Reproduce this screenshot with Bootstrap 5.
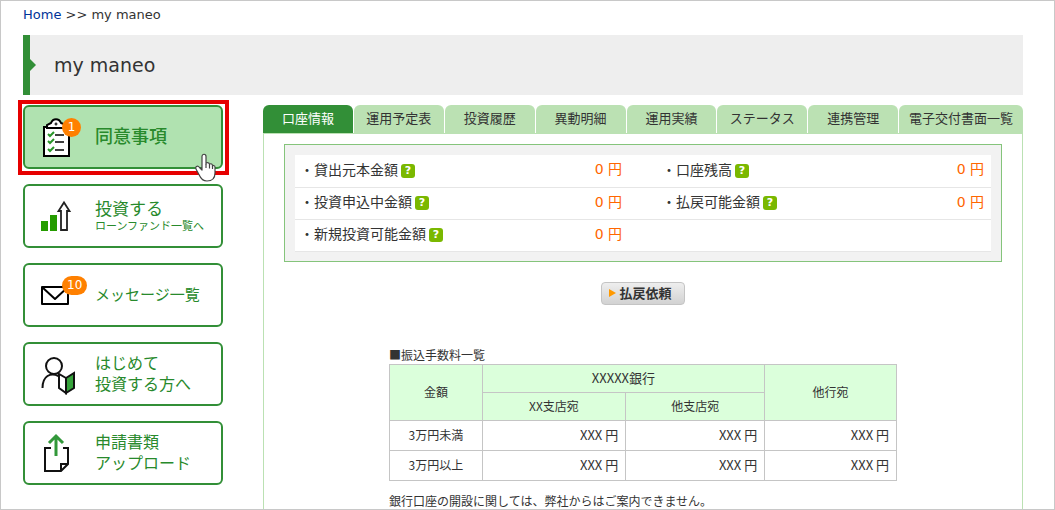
<!DOCTYPE html>
<html lang="ja">
<head>
<meta charset="utf-8">
<meta name="viewport" content="width=device-width, initial-scale=1">
<title>my maneo</title>
<link href="https://cdn.jsdelivr.net/npm/bootstrap@5.3.0/dist/css/bootstrap.min.css" rel="stylesheet">
<style>
:root{--green:#328f37;--pale:#bbe1b3}
body{font-family:"DejaVu Sans","Noto Sans CJK JP",sans-serif;font-size:14px;color:#333;background:#fff}
.shell{border:1px solid #c8c8c8;padding:0 31px 0 22px}
.crumbs{font-size:13px;line-height:18px;padding:5px 0 11px}
.crumbs a{color:#039;text-decoration:none}
.page-title{background:#eee;border-left:7px solid var(--green);font-size:19px;font-weight:400;line-height:60px;padding-left:24px;margin:0 0 10px}
.page-title::before{content:"";position:absolute;left:0;top:24px;border:6px solid transparent;border-left-color:var(--green);border-right:0}
.side{width:200px;gap:15px}
.side-btn{height:64px;border:2px solid var(--green);border-radius:6px;background:#fff;color:#288a2c;text-decoration:none;padding-left:10px;gap:10px;font-family:"Noto Sans CJK JP",sans-serif;font-size:16px;line-height:21px}
.side-btn.current{background:#b0e2b0}
.side-btn svg{width:50px;height:60px;display:block}
.side-text{padding-bottom:3px}
.side-btn .big{font-size:18px;font-weight:500}
.side-btn .mid{font-size:17px}
.side-btn .long{font-size:15px}
.side-btn .sub{font-size:11px;line-height:14px}
.count{left:27px;top:11px;min-width:19px;height:19px;border-radius:10px;background:#ff8000;color:#fff;font:12px/19px "DejaVu Sans",sans-serif;padding:0 5px;text-align:center}
.mark-frame{inset:-7px -8px -8px -7px;border:4px solid #e60000;pointer-events:none}
.hand{right:5px;bottom:-15px;pointer-events:none}
.side-btn svg.hand{width:21px;height:29px}
.content{margin-left:40px;min-width:0}
.tabs{border-bottom:1px solid var(--pale);gap:1px}
.tabs a{flex:1 1 90px;height:28px;line-height:25px;background:var(--pale);border-radius:6px 6px 0 0;color:#333;text-decoration:none;text-align:center;font-family:"Noto Sans CJK JP",sans-serif;font-size:13px;white-space:nowrap}
.tabs a.active{background:var(--green);color:#fff}
.tabs a:last-child{flex:1 1 124px}
.pane{border:1px solid var(--pale);border-top:0;padding:10px 20px 30px}
.summary{border:1px solid #85c47b;background:#f2f2f2;padding:10px 10px 9px}
.summary table{width:100%;background:#fff;table-layout:fixed;font-family:"Noto Sans CJK JP",sans-serif;font-size:14px;line-height:21px}
.summary tr{border-bottom:1px solid #e6e6e6;height:32px}
.summary th{font-weight:400;padding:0 0 3px 5px;white-space:nowrap}
.summary td{color:#f60;text-align:right;padding:0 21px 2px 0;font-family:"DejaVu Sans","Noto Sans CJK JP",sans-serif}
.summary td:last-child{padding-right:7px}
.summary td + th{padding-left:19px}
.help{width:14px;height:14px;border:0;border-radius:3px;background:#7ab800;color:#fff;font:bold 11px/14px "DejaVu Sans",sans-serif;padding:0;margin-left:3px;vertical-align:1px}
.refund{width:84px;height:23px;margin:20px auto 41px;border:1px solid #c4c4c4;border-radius:4px;background:linear-gradient(#eee,#d2d2d2);color:#333;font-family:"Noto Sans CJK JP",sans-serif;font-size:13px;font-weight:700;line-height:18px;padding:0 5px 1px 0;gap:3px}
.fees{width:508px;font-family:"Noto Sans CJK JP",sans-serif;font-size:12px;line-height:18px}
.fees table{width:100%;table-layout:fixed;border-collapse:collapse}
.fees caption{caption-side:top;color:#333;padding:0}
.fees th,.fees td{border:1px solid #c5c5c5;font-weight:400;text-align:center;padding:0 7px;height:30px}
.fees thead th{background:#dbffdb;height:28px}
.fees .bank,.fees td{font-size:13px}
.fees td{text-align:right}
.fees p{margin:11px 0 0;white-space:nowrap}
</style>
<script src="https://cdn.jsdelivr.net/npm/bootstrap@5.3.0/dist/js/bootstrap.bundle.min.js"></script>
</head>
<body>
<div class="shell vh-100 overflow-hidden">
  <nav class="crumbs" aria-label="breadcrumb"><a href="#">Home</a> &gt;&gt; my maneo</nav>
  <h1 class="page-title position-relative">my maneo</h1>
  <div class="d-flex align-items-stretch">
    <nav class="side d-flex flex-column flex-shrink-0">
      <a href="#" class="side-btn current d-flex align-items-center position-relative">
        <span class="position-relative">
          <svg viewBox="0 0 50 60" fill="none" stroke="#000" stroke-width="2"><path d="M9 20h25v29H9z" fill="#fff"/><path d="M12 21v-3l4-2c2-5 8-5 10 0l5 2v3z" fill="#fff"/><path d="M19.500 17h3M21 15.500v3" stroke-width="1.200"/><path d="M20 28h9M20 35h9M20 43h9" stroke-width="1.500"/><path d="M13 27l2 2 4-4M13 34l2 2 4-4M13 42l2 2 4-4" stroke="#289628"/></svg>
          <span class="count position-absolute">1</span>
        </span>
        <span class="side-text big">同意事項</span>
        <span class="mark-frame position-absolute"></span>
        <svg class="hand position-absolute" viewBox="0 0 21 29" fill="#fff" stroke="#444" stroke-width="1.200" stroke-linejoin="round"><path d="M7 17V3.500C7 .5 11 .5 11 3.500V11c0-2 3.500-2 3.500.5V12c0-2 3-1.500 3 .8v.7c0-1.500 2.500-1.500 2.500.8V20c0 5-3 8-8 8-4 0-6-2-7.500-5.500L1.500 17c-2-3.500 1-5 3-2.500z"/><path d="M11 11v4M14.500 12v3.500M17.500 13v3"/></svg>
      </a>
      <a href="#" class="side-btn d-flex align-items-center">
        <svg viewBox="0 0 50 60"><path d="M6 35h7v10H6zM15 29h7v16h-7z" fill="#259c00"/><path d="M26 44V25h-2.500L29 16.500 34.500 25H32v19z" fill="#fff" stroke="#222" stroke-width="1.800"/></svg>
        <span class="side-text"><span class="mid d-block">投資する</span><span class="sub d-block">ローンファンド一覧へ</span></span>
      </a>
      <a href="#" class="side-btn d-flex align-items-center">
        <span class="position-relative">
          <svg viewBox="0 0 50 60" fill="none" stroke="#000" stroke-width="2" stroke-linejoin="round"><path d="M7 22h26v17H7zM7 22l13 12 13-12"/></svg>
          <span class="count position-absolute">10</span>
        </span>
        <span class="side-text long">メッセージ一覧</span>
      </a>
      <a href="#" class="side-btn d-flex align-items-center">
        <svg viewBox="0 0 50 60" fill="none" stroke="#111" stroke-width="2"><circle cx="19" cy="22" r="8"/><path d="M7.500 44c0-12 8-16 16-12"/><path d="M31 34l8-5v15l-8 5z" fill="#36a33b"/><path d="M31 34l-7-4v14l7 5z" fill="#fff"/></svg>
        <span class="side-text">はじめて<br>投資する方へ</span>
      </a>
      <a href="#" class="side-btn d-flex align-items-center">
        <svg viewBox="0 0 50 60" fill="none" stroke="#111" stroke-width="2"><path d="M16 25h-6v23h16l7-7V25h-5M26 48v-7h7"/><path d="M21 33V13M14 20l7-7 7 7" stroke="#32983a" stroke-width="3"/></svg>
        <span class="side-text">申請書類<br>アップロード</span>
      </a>
    </nav>
    <main class="content flex-grow-1">
      <nav class="tabs d-flex">
        <a href="#" class="active" aria-current="page">口座情報</a><a href="#">運用予定表</a><a href="#">投資履歴</a><a href="#">異動明細</a><a href="#">運用実績</a><a href="#">ステータス</a><a href="#">連携管理</a><a href="#">電子交付書面一覧</a>
      </nav>
      <div class="pane">
        <div class="summary">
          <table>
            <tr><th scope="row">・貸出元本金額<button type="button" class="help">?</button></th><td>0 円</td><th scope="row">・口座残高<button type="button" class="help">?</button></th><td>0 円</td></tr>
            <tr><th scope="row">・投資申込中金額<button type="button" class="help">?</button></th><td>0 円</td><th scope="row">・払戻可能金額<button type="button" class="help">?</button></th><td>0 円</td></tr>
            <tr><th scope="row">・新規投資可能金額<button type="button" class="help">?</button></th><td>0 円</td><td colspan="2"></td></tr>
          </table>
        </div>
        <button type="button" class="refund d-flex align-items-center justify-content-center"><svg width="7" height="8" viewBox="0 0 7 8"><path d="M0 0l7 4-7 4z" fill="#f90"/></svg>払戻依頼</button>
        <section class="fees mx-auto">
          <table>
            <caption>■振込手数料一覧</caption>
            <colgroup><col style="width:18.300%"><col style="width:28.300%"><col style="width:27.400%"><col style="width:26%"></colgroup>
            <thead>
              <tr><th rowspan="2">金額</th><th colspan="2" class="bank">XXXXX銀行</th><th rowspan="2">他行宛</th></tr>
              <tr><th>XX支店宛</th><th>他支店宛</th></tr>
            </thead>
            <tbody>
              <tr><th scope="row">3万円未満</th><td>XXX 円</td><td>XXX 円</td><td>XXX 円</td></tr>
              <tr><th scope="row">3万円以上</th><td>XXX 円</td><td>XXX 円</td><td>XXX 円</td></tr>
            </tbody>
          </table>
          <p>銀行口座の開設に関しては、弊社からはご案内できません。</p>
        </section>
      </div>
    </main>
  </div>
</div>
</body>
</html>
